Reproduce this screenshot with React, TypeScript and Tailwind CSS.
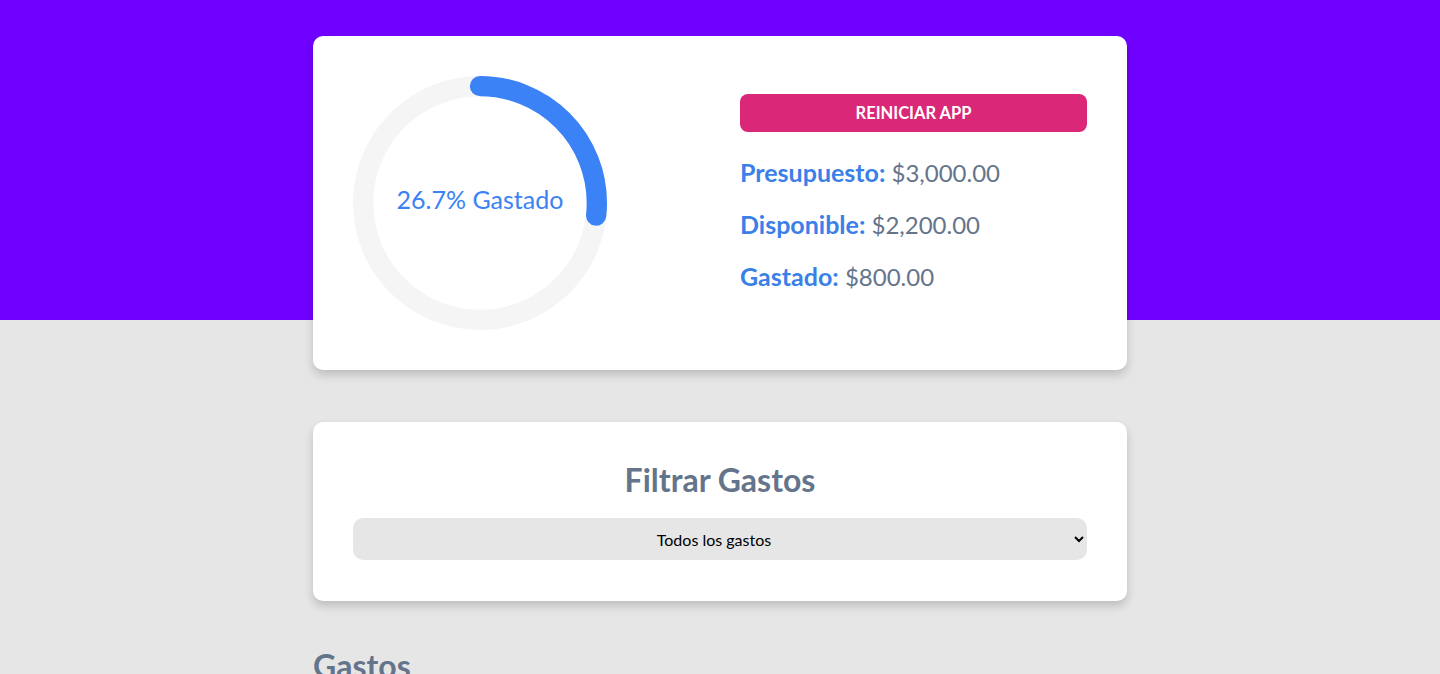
import React from "react";

const C = 2 * Math.PI * 46;

function Progress({ pct }: { pct: number }) {
  const d = "M 50,50 m 0,-46 a 46,46 0 1 1 0,92 a 46,46 0 1 1 0,-92";
  return (
    <div className="relative w-[254px] h-[254px]">
      <svg viewBox="0 0 100 100" className="w-full h-full">
        <path d={d} fill="none" stroke="#f5f5f5" strokeWidth={8} />
        <path
          d={d}
          fill="none"
          stroke="#3b82f6"
          strokeWidth={8}
          strokeLinecap="round"
          strokeDasharray={`${C} ${C}`}
          strokeDashoffset={C * (1 - pct / 100)}
        />
      </svg>
      <div className="absolute inset-0 flex items-center justify-center pb-[6px] text-[25px] text-[#3b82f6]">
        {pct}% Gastado
      </div>
    </div>
  );
}

export default function App() {
  return (
    <div className="min-h-screen bg-[#e6e6e6] font-['Lato',sans-serif]">
      <div className="h-[320px] bg-[#7000ff] pt-9">
        <div className="mx-auto w-[814px] bg-white rounded-[10px] shadow-[0_5px_10px_rgba(0,0,0,0.18)] p-10 grid grid-cols-2 gap-10 items-center">
          <div>
            <Progress pct={26.7} />
          </div>
          <div className="flex flex-col">
            <button className="h-[38px] w-full rounded-[8px] bg-[#db2777] text-white font-bold text-[16.5px] uppercase mb-6">
              Reiniciar App
            </button>
            <p className="text-[24px] leading-8 mb-[19px] text-[#64748b]">
              <span className="font-bold text-[25px] text-[#3b7fe8]">Presupuesto:</span> $3,000.00
            </p>
            <p className="text-[24px] leading-8 mb-[19px] text-[#64748b]">
              <span className="font-bold text-[25px] text-[#3b7fe8]">Disponible:</span> $2,200.00
            </p>
            <p className="text-[24px] leading-8 mb-[19px] text-[#64748b]">
              <span className="font-bold text-[25px] text-[#3b7fe8]">Gastado:</span> $800.00
            </p>
          </div>
        </div>
      </div>
      <div className="mx-auto w-[814px] mt-[102px]">
        <div className="bg-white rounded-[10px] shadow-[0_5px_10px_rgba(0,0,0,0.18)] px-10 pt-10 pb-[41px]">
          <h2 className="text-center text-[32px] leading-9 font-bold text-[#64748b] mb-5">
            Filtrar Gastos
          </h2>
          <select className="w-full h-[42px] rounded-[10px] bg-[#e6e6e6] text-black text-[16px] text-center px-2 outline-none">
            <option>Todos los gastos</option>
            <option>Ahorro</option>
            <option>Comida</option>
          </select>
        </div>
        <h2 className="mt-[47px] text-[32px] leading-9 font-bold text-[#64748b]">Gastos</h2>
        <div className="h-[200px]" />
      </div>
    </div>
  );
}
